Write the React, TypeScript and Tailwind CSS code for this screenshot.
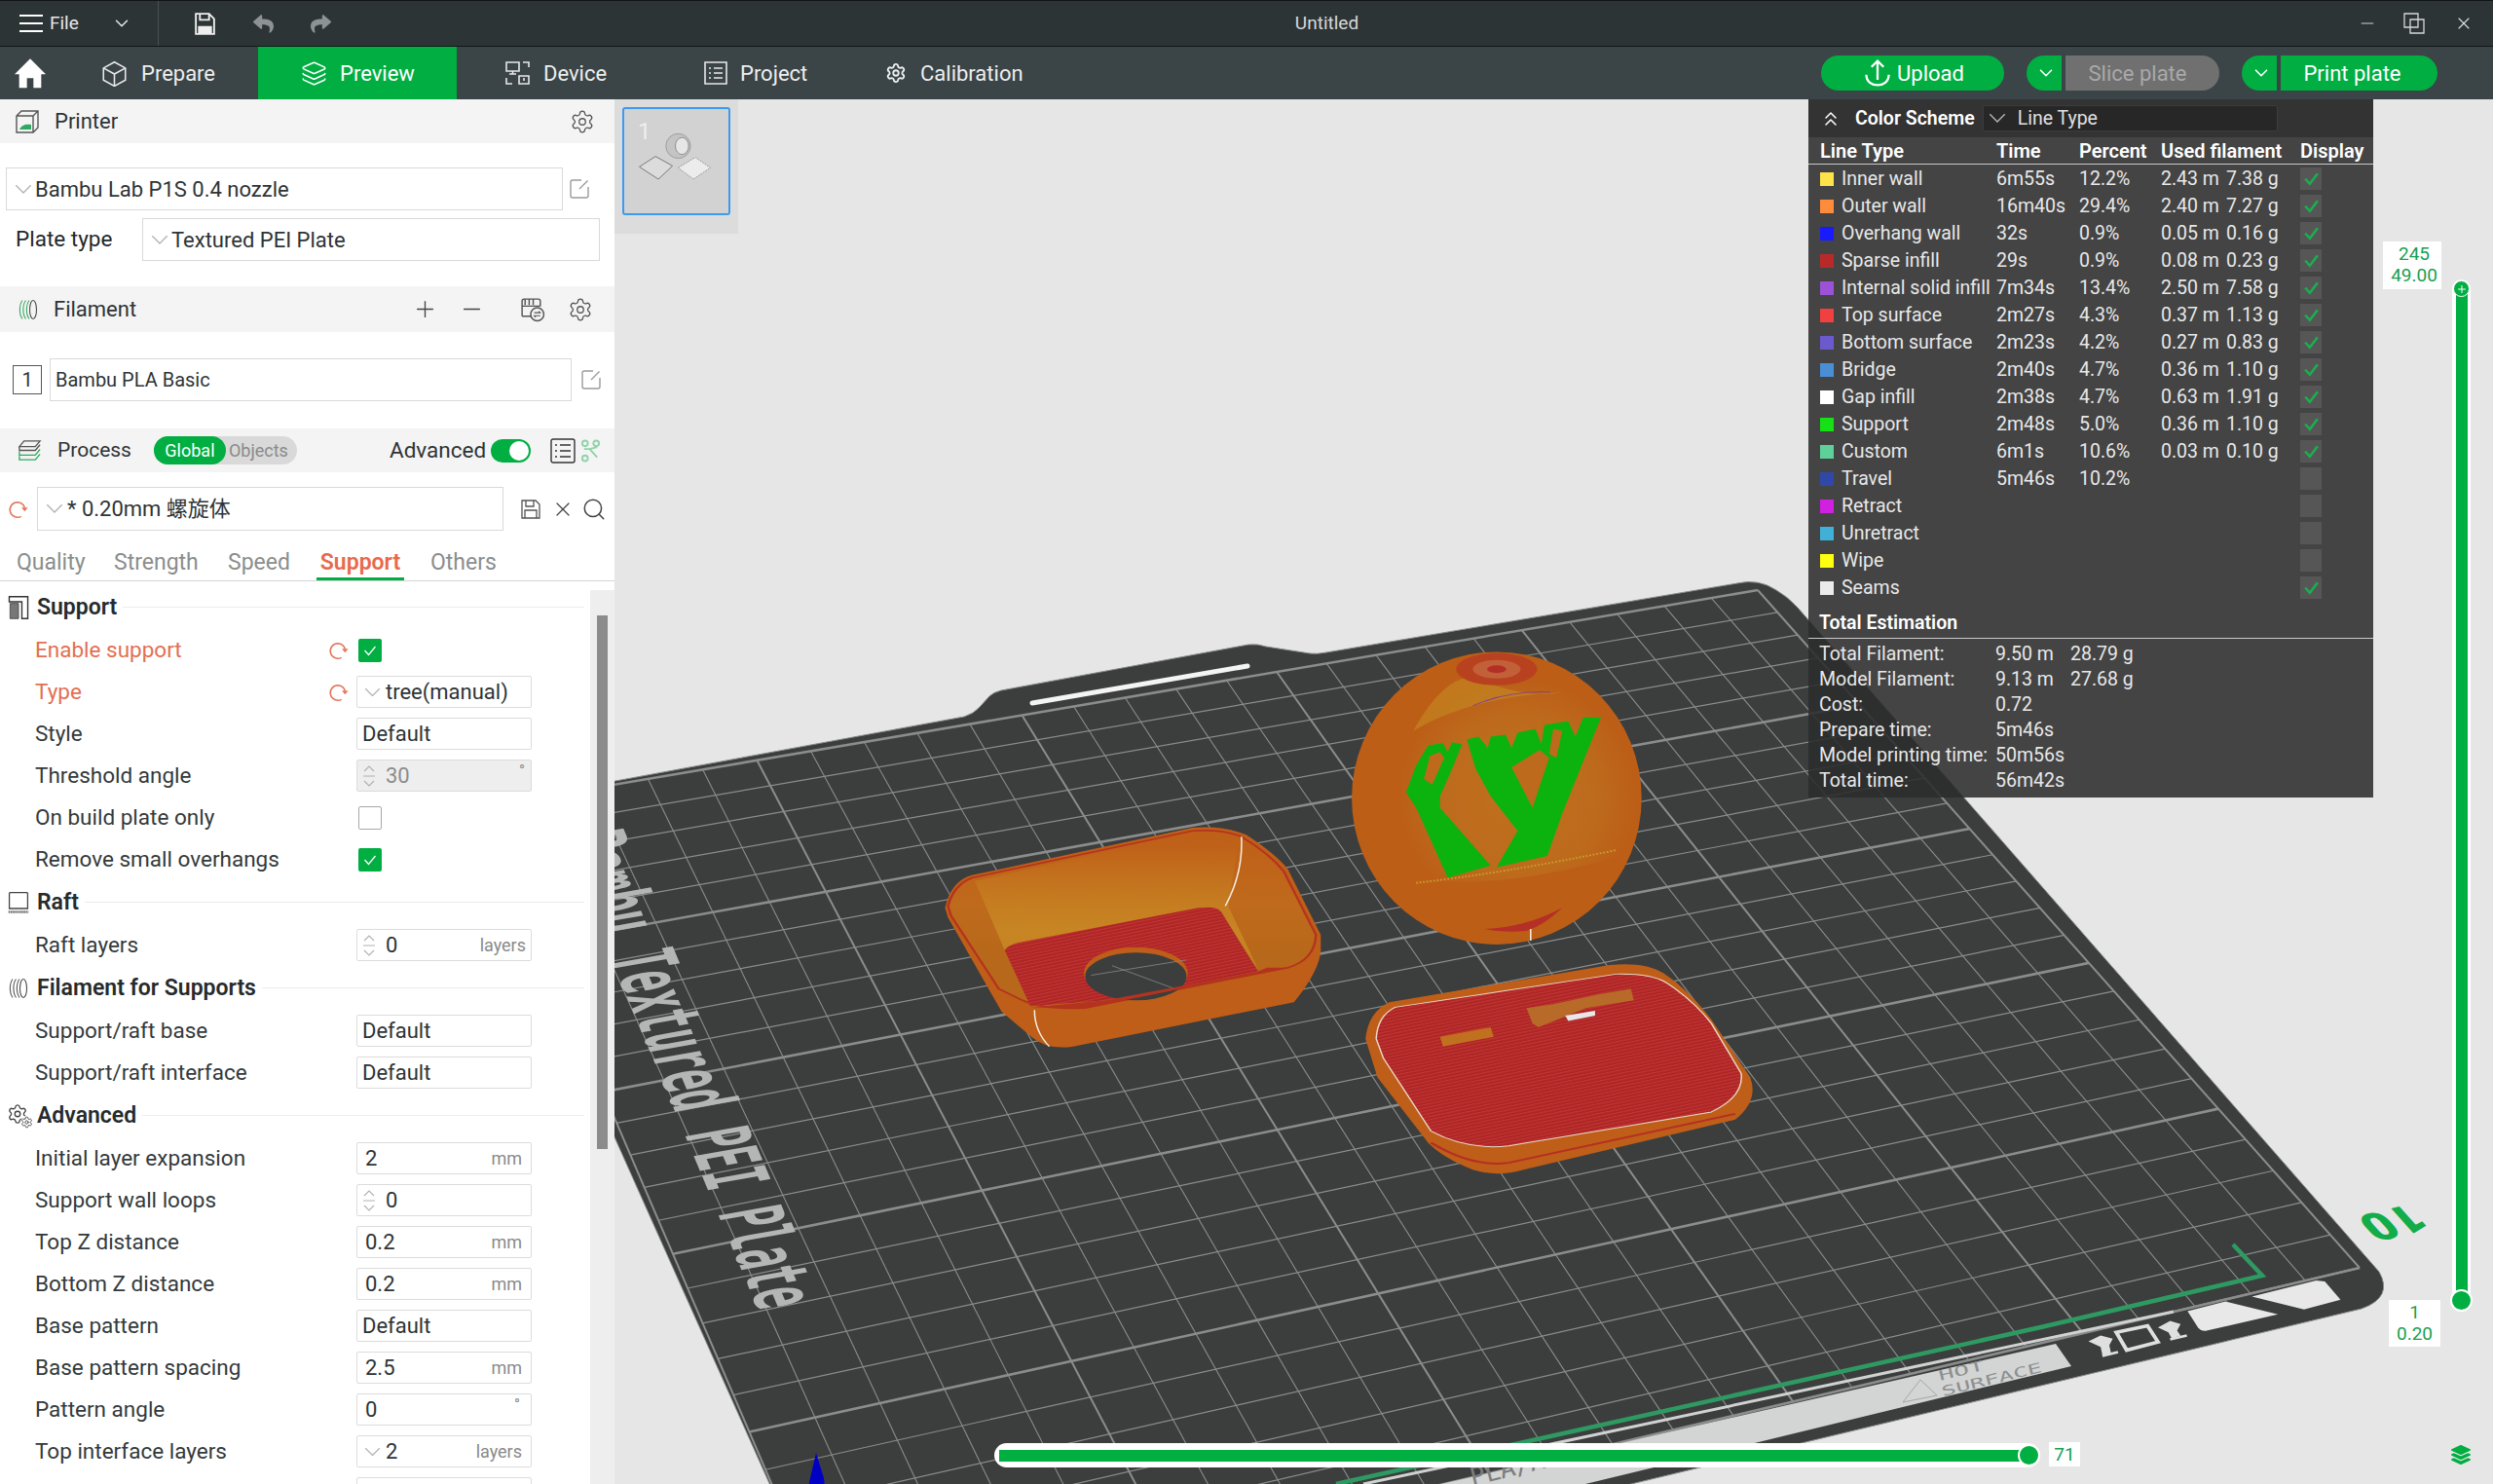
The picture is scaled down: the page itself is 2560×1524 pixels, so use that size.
import { ChevronDown, ChevronsUp, Layers, Minus, Plus, Search, Settings, X } from 'lucide-react';
import { FaLayerGroup, FaReply, FaShare } from 'react-icons/fa';

const Chev = ({ className = 'w-[18px]' }: { className?: string }) => (
  <svg viewBox="0 0 14 8" className={`${className} shrink-0`} fill="none" stroke="#b4b4b4" strokeWidth="1.1">
    <path d="M1 1l6 6 6-6" />
  </svg>
);

const EditIcon = () => (
  <svg viewBox="0 0 24 24" className="w-[24px] h-[24px]" fill="none" stroke="#9b9b9b" strokeWidth="1.4">
    <path d="M14 3H5a2 2 0 0 0-2 2v14a2 2 0 0 0 2 2h14a2 2 0 0 0 2-2v-9M20.5 3.5L12 12" />
  </svg>
);

const UndoIcon = ({ size = 'w-[22px] h-[22px]' }: { size?: string }) => (
  <svg viewBox="0 0 24 24" className={size} fill="none" stroke="#e2765a" strokeWidth="1.7">
    <path d="M20 10a9 9 0 0 0-8-6 8.500 8.500 0 1 0 4 16" />
    <path d="M16.500 10h7l-3.500 4.500z" fill="#e2765a" stroke="none" />
  </svg>
);

const Stepper = ({ color = '#a8a8a8' }: { color?: string }) => (
  <svg viewBox="0 0 14 26" className="w-[14px] h-[26px] shrink-0" fill="none" stroke={color} strokeWidth="1.1">
    <path d="M2 8l5-5 5 5M2 18l5 5 5-5M1 13h12" strokeOpacity="0.9" />
  </svg>
);

const FilamentIcon = ({ stroke = '#3aa861' }: { stroke?: string }) => (
  <svg viewBox="0 0 24 24" className="w-[24px] h-[24px]" fill="none" stroke={stroke} strokeWidth="1.1">
    <path d="M6 2.500C2.500 7 2.500 17 6 21.500M9.500 2.500C6 7 6 17 9.500 21.500M13 2.500C9.500 7 9.500 17 13 21.500" />
    <ellipse cx="17" cy="12" rx="3.500" ry="9.500" stroke="#4a4a4a" />
  </svg>
);

const SectionIcon = ({ name }: { name: string }) => {
  if (name === 'Support')
    return (
      <svg viewBox="0 0 26 30" className="w-[24px] h-[26px]" fill="none" stroke="#333" strokeWidth="1.6">
        <path d="M2 2h22v26h-7V8H2z" />
        <path d="M3 10h10v18H3z" fill="#777" stroke="#444" strokeWidth="1" />
      </svg>
    );
  if (name === 'Raft')
    return (
      <svg viewBox="0 0 26 28" className="w-[24px] h-[24px]" fill="none" stroke="#444" strokeWidth="1.5">
        <path d="M2 21V3a1 1 0 0 1 1-1h20a1 1 0 0 1 1 1v18z" />
        <path d="M1 25h24" strokeWidth="3" strokeDasharray="2 0.6" stroke="#777" />
      </svg>
    );
  if (name === 'Filament for Supports') return <FilamentIcon stroke="#555" />;
  return (
    <div className="relative w-[26px] h-[26px]">
      <Settings className="w-[22px] h-[22px] text-[#444]" strokeWidth={1.5} />
      <Settings className="absolute left-[14px] top-[13px] w-[13px] h-[13px] text-[#444] bg-white rounded-full" strokeWidth={1.7} />
    </div>
  );
};

type Row = {
  label: string;
  kind: 'check' | 'box' | 'select' | 'step' | 'num' | 'disabled' | 'pick';
  value?: string;
  unit?: string;
  on?: boolean;
  dirty?: boolean;
};

const sections: { title: string; rows: Row[] }[] = [
  {
    title: 'Support',
    rows: [
      { label: 'Enable support', kind: 'check', on: true, dirty: true },
      { label: 'Type', kind: 'pick', value: 'tree(manual)', dirty: true },
      { label: 'Style', kind: 'select', value: 'Default' },
      { label: 'Threshold angle', kind: 'disabled', value: '30', unit: '°' },
      { label: 'On build plate only', kind: 'check', on: false },
      { label: 'Remove small overhangs', kind: 'check', on: true },
    ],
  },
  { title: 'Raft', rows: [{ label: 'Raft layers', kind: 'step', value: '0', unit: 'layers' }] },
  {
    title: 'Filament for Supports',
    rows: [
      { label: 'Support/raft base', kind: 'select', value: 'Default' },
      { label: 'Support/raft interface', kind: 'select', value: 'Default' },
    ],
  },
  {
    title: 'Advanced',
    rows: [
      { label: 'Initial layer expansion', kind: 'num', value: '2', unit: 'mm' },
      { label: 'Support wall loops', kind: 'step', value: '0' },
      { label: 'Top Z distance', kind: 'num', value: '0.2', unit: 'mm' },
      { label: 'Bottom Z distance', kind: 'num', value: '0.2', unit: 'mm' },
      { label: 'Base pattern', kind: 'select', value: 'Default' },
      { label: 'Base pattern spacing', kind: 'num', value: '2.5', unit: 'mm' },
      { label: 'Pattern angle', kind: 'num', value: '0', unit: '°' },
      { label: 'Top interface layers', kind: 'pick', value: '2', unit: 'layers' },
      { label: '', kind: 'select', value: '' },
    ],
  },
];

const unitClass = (row: Row) => {
  if (row.label === 'Raft layers') return 'pr-[5px] text-[18px]';
  if (row.label === 'Threshold angle') return 'pr-[6px] text-[16px] self-start leading-[22px]';
  if (row.unit === '°') return 'pr-[11px] text-[16px] self-start leading-[22px]';
  return 'pr-[9px] text-[18px]';
};

const Field = ({ row }: { row: Row }) => {
  if (row.kind === 'check') {
    return row.on ? (
      <div className="w-[24px] h-[24px] ml-[2px] rounded-[2px] bg-[#00ae42] flex items-center justify-center">
        <svg viewBox="0 0 16 16" className="w-[16px] h-[16px]" fill="none" stroke="#fff" strokeWidth="1.3">
          <path d="M2.500 8l4 4.500 7-8.500" />
        </svg>
      </div>
    ) : (
      <div className="w-[24px] h-[24px] ml-[2px] rounded-[2px] bg-white border border-[#a8a8a8]" />
    );
  }
  const disabled = row.kind === 'disabled';
  return (
    <div
      className={`w-[180px] h-[33px] flex items-center border border-[#dcdcdc] rounded-[2px] text-[22px] ${
        disabled ? 'bg-[#eeeeee] text-[#8c8c8c]' : 'bg-white text-[#2e3436]'
      }`}
    >
      {row.kind === 'select' && <span className="pl-[5px]">{row.value}</span>}
      {row.kind === 'num' && <span className="pl-[8px]">{row.value}</span>}
      {row.kind === 'pick' && (
        <>
          <span className="pl-[7px] pr-[5px]">
            <Chev className="w-[17px]" />
          </span>
          <span>{row.value}</span>
        </>
      )}
      {(row.kind === 'step' || disabled) && (
        <>
          <span className="pl-[5px] pr-[10px] flex">
            <Stepper />
          </span>
          <span>{row.value}</span>
        </>
      )}
      {row.unit && <span className={`ml-auto text-[#8a8a8a] ${unitClass(row)}`}>{row.unit}</span>}
    </div>
  );
};

const SettingRow = ({ row }: { row: Row }) => (
  <div className="h-[43px] flex items-center shrink-0">
    <div className={`w-[336px] pl-[36px] text-[22.5px] ${row.dirty ? 'text-[#e36f52]' : 'text-[#333a3c]'}`}>{row.label}</div>
    <div className="w-[30px] flex items-center">{row.dirty && <UndoIcon />}</div>
    {row.label ? <Field row={row} /> : <div className="w-[180px] h-[33px] border border-[#dcdcdc] rounded-[2px]" />}
  </div>
);

const PanelHeader = ({ children, className = '' }: { children: React.ReactNode; className?: string }) => (
  <div className={`bg-[#f4f4f4] flex items-center text-[22px] text-[#2e3436] shrink-0 ${className}`}>{children}</div>
);

const LeftPanel = () => (
  <aside className="w-[631px] shrink-0 bg-white flex flex-col overflow-hidden">
    <PanelHeader className="h-[45px]">
      <svg viewBox="0 0 26 26" className="w-[26px] h-[26px] ml-[15px]" fill="none" stroke="#555" strokeWidth="1.4">
        <path d="M2 7l5-5h17v17l-5 5H2zM2 7h17v17M19 7l5-5" />
        <path d="M5 21c2-5 7-6 12-5v5z" fill="#2fa860" stroke="none" />
      </svg>
      <span className="ml-[15px]">Printer</span>
      <Settings className="ml-auto mr-[20px] w-[26px] h-[26px] text-[#555]" strokeWidth={1.2} />
    </PanelHeader>

    <div className="pt-[25px] pb-[26px] flex flex-col gap-[8px] shrink-0">
      <div className="flex items-center h-[44px] pl-[6px]">
        <div className="w-[572px] h-full border border-[#d9d9d9] flex items-center pl-[8px] gap-[3px] text-[22px] text-[#2e3436]">
          <Chev />
          Bambu Lab P1S 0.4 nozzle
        </div>
        <span className="ml-[5px]">
          <EditIcon />
        </span>
      </div>
      <div className="flex items-center h-[44px]">
        <div className="w-[146px] pl-[16px] text-[22.5px] text-[#22282a]">Plate type</div>
        <div className="w-[470px] h-full border border-[#d9d9d9] flex items-center pl-[8px] gap-[3px] text-[22px] text-[#2e3436]">
          <Chev />
          Textured PEI Plate
        </div>
      </div>
    </div>

    <PanelHeader className="h-[47px]">
      <span className="ml-[17px] flex">
        <FilamentIcon />
      </span>
      <span className="ml-[14px]">Filament</span>
      <Plus className="ml-[283px] w-[27px] h-[27px] text-[#444]" strokeWidth={1.2} />
      <Minus className="ml-[21px] w-[27px] h-[27px] text-[#444]" strokeWidth={1.2} />
      <svg viewBox="0 0 26 26" className="ml-[35px] w-[27px] h-[27px]" fill="none" stroke="#555" strokeWidth="1.4">
        <path d="M3 20V5a2 2 0 0 1 2-2h14a2 2 0 0 1 2 2v5M6 3v6M10 3v6M14 3v6M3 10h18M3 20h10" />
        <circle cx="18" cy="18" r="6.500" fill="#f4f4f4" />
        <path d="M15 16.500h6l-1.500-1.500M21 19.500h-6l1.500 1.500" strokeWidth="1" />
      </svg>
      <Settings className="ml-[23px] w-[26px] h-[26px] text-[#555]" strokeWidth={1.2} />
    </PanelHeader>

    <div className="pt-[27px] pb-[28px] flex items-center shrink-0 h-[99px]">
      <div className="ml-[13px] w-[30px] h-[30px] border border-[#555] flex items-center justify-center text-[20px] text-[#2e3436]">
        1
      </div>
      <div className="ml-[8px] w-[536px] h-[44px] border border-[#d9d9d9] flex items-center pl-[5px] text-[20px] text-[#2e3436]">
        Bambu PLA Basic
      </div>
      <span className="ml-[8px]">
        <EditIcon />
      </span>
    </div>

    <PanelHeader className="h-[45px]">
      <svg viewBox="0 0 26 26" className="ml-[18px] w-[25px] h-[25px]" fill="none" stroke="#555" strokeWidth="1.4">
        <path d="M2 9l5-6h17l-5 6zM2 9v4h17l5-6" />
        <path d="M2 14v4h17l5-6M2 19v4h17l5-6" stroke="#2fa860" />
      </svg>
      <span className="ml-[16px] text-[21px]">Process</span>
      <div className="ml-[23px] h-[29px] w-[147px] rounded-full bg-[#d9d9d9] flex items-center text-[18px] text-[#8a8a8a]">
        <span className="w-[74px] h-full rounded-full bg-[#00ae42] text-white flex items-center justify-center">Global</span>
        <span className="pl-[3px]">Objects</span>
      </div>
      <span className="ml-[95px] text-[22.5px]">Advanced</span>
      <div className="ml-[5px] w-[41px] h-[24px] rounded-full bg-[#00ae42] flex items-center justify-end pr-[2px]">
        <div className="w-[20px] h-[20px] rounded-full bg-white" />
      </div>
      <svg viewBox="0 0 26 26" className="ml-[20px] w-[26px] h-[26px]" fill="none" stroke="#333" strokeWidth="1.4">
        <rect x="1" y="1" width="24" height="24" rx="2" />
        <path d="M5 7h2M10 7h11M5 13h2M10 13h11M5 19h2M10 19h11" />
      </svg>
      <svg viewBox="0 0 22 26" className="ml-[5px] w-[21px] h-[26px]" fill="none" stroke="#8fd3a8" strokeWidth="2">
        <circle cx="5" cy="5" r="3" />
        <circle cx="17" cy="5" r="3" />
        <circle cx="5" cy="21" r="3" />
        <path d="M4 11h6l8 9M10 11l8-2" />
      </svg>
    </PanelHeader>

    <div className="pt-[15px] flex items-center shrink-0">
      <span className="ml-[7px] flex">
        <UndoIcon />
      </span>
      <div className="ml-[9px] w-[479px] h-[45px] border border-[#d9d9d9] flex items-center pl-[8px] gap-[4px] text-[22px] text-[#2e3436]">
        <Chev />
        * 0.20mm 螺旋体
      </div>
      <svg viewBox="0 0 24 24" className="ml-[16px] w-[24px] h-[24px]" fill="none" stroke="#555" strokeWidth="1.3">
        <path d="M3 3h14l4 4v14H3zM7 3v6h8V3M6 21v-8h12v8" />
      </svg>
      <X className="ml-[9px] w-[24px] h-[24px] text-[#444]" strokeWidth={1.3} />
      <Search className="ml-[7px] w-[26px] h-[26px] text-[#444]" strokeWidth={1.4} />
    </div>

    <div className="h-[52px] border-b border-[#d5d5d5] flex text-[23px] text-[#8a8e8e] pl-[17px] items-end shrink-0 leading-[50px]">
      <span className="h-[43px] w-[100px]">Quality</span>
      <span className="h-[43px] w-[117px]">Strength</span>
      <span className="h-[43px] w-[91px]">Speed</span>
      <span className="h-[43px] w-[90px] text-center font-semibold text-[#e9694e] border-b-[3px] border-[#00ae42]">Support</span>
      <span className="h-[43px] ml-[27px]">Others</span>
    </div>

    <div className="flex flex-1 min-h-0 overflow-hidden">
      <div className="w-[606px] pt-[4px] flex flex-col shrink-0">
        {sections.map((section) => (
          <div key={section.title} className="flex flex-col">
            <div className="h-[45px] flex items-center shrink-0 pl-[7px] pr-[6px]">
              <div className="w-[26px] flex">
                <SectionIcon name={section.title} />
              </div>
              <span className="ml-[5px] pt-[2px] text-[23px] font-semibold text-[#262b2d] whitespace-nowrap">{section.title}</span>
              <div className="ml-[6px] flex-1 h-px bg-[#ececec]" />
            </div>
            {section.rows.map((row) => (
              <SettingRow key={row.label || 'last'} row={row} />
            ))}
          </div>
        ))}
      </div>
      <div className="w-[25px] bg-[#eeeeee] pl-[7px] pt-[26px] mt-[9px]">
        <div className="w-[11px] h-[548px] bg-[#8c8c8c]" />
      </div>
    </div>
  </aside>
);

// maps the bed's unit square on to the picture with a plain homography
const [p0, p1, p2, p3] = [
  [494, 829],
  [1805, 606],
  [2423, 1302],
  [856, 1672],
];
const dx1 = p1[0] - p2[0];
const dx2 = p3[0] - p2[0];
const dx3 = p0[0] - p1[0] + p2[0] - p3[0];
const dy1 = p1[1] - p2[1];
const dy2 = p3[1] - p2[1];
const dy3 = p0[1] - p1[1] + p2[1] - p3[1];
const den = dx1 * dy2 - dx2 * dy1;
const g = (dx3 * dy2 - dx2 * dy3) / den;
const h = (dx1 * dy3 - dx3 * dy1) / den;
const bed = (u: number, v: number) => {
  const w = g * u + h * v + 1;
  return [
    ((p1[0] - p0[0] + g * p1[0]) * u + (p3[0] - p0[0] + h * p3[0]) * v + p0[0]) / w,
    ((p1[1] - p0[1] + g * p1[1]) * u + (p3[1] - p0[1] + h * p3[1]) * v + p0[1]) / w,
  ];
};

const CELLS = 25;
const gridLines = Array.from({ length: CELLS + 1 }, (_, i) => i);

const Bed = () => (
  <>
    <path
      d="M480 830L990 736Q1000 733 1006 726L1016 715Q1020 711 1028 709L1282 662Q1292 661 1300 664L1345 671Q1352 672 1362 670L1784 599Q1806 594 1824 606Q1836 613 1846 624L2443 1306Q2458 1332 2425 1344L1650 1530H793L480 830Z"
      fill="#3c3e3e"
      stroke="#8a8c8c"
      strokeWidth="1"
    />
    <path d="M1060 722L1281 684" stroke="#f4f4f4" strokeWidth="5" strokeLinecap="round" />
    {gridLines.map((i) => {
      const a = bed(i / CELLS, 0);
      const b = bed(i / CELLS, 1);
      const c = bed(0, i / CELLS);
      const d = bed(1, i / CELLS);
      return (
        <g key={i} stroke="#8b8d8d">
          <line x1={a[0]} y1={a[1]} x2={b[0]} y2={b[1]} strokeWidth={i % 5 === 0 ? 2 : 1.1} />
          <line x1={c[0]} y1={c[1]} x2={d[0]} y2={d[1]} strokeWidth={i % 5 === 0 ? 2.6 : 1.2} />
        </g>
      );
    })}
    <text
      transform="matrix(0.387 0.922 -2.2 0.39 575 860)"
      fontFamily="'DejaVu Sans Mono', monospace"
      fontWeight="700"
      fontSize="40"
      fill="#b4b6b6"
      textLength="528"
      lengthAdjust="spacingAndGlyphs"
    >
      Bambu Textured PEI Plate
    </text>
    <path d="M1372 1524L2100 1362L2323 1310L2293 1278" fill="none" stroke="#2e9a62" strokeWidth="4.5" />
    <path d="M1400 1524L2232 1347" stroke="#d0d2d2" strokeWidth="3" />
    <path d="M2232 1347L2423 1302" stroke="#8b8d8d" strokeWidth="2" />
    <path d="M2111 1380L2127 1403L1628 1524H1480z" fill="#d3d5d5" />
    <text
      transform="matrix(0.97 -0.24 0.24 0.97 1992 1418)"
      fontFamily="'DejaVu Sans Mono', monospace"
      fontSize="14"
      fill="#8e9090"
      textLength="48"
      lengthAdjust="spacingAndGlyphs"
    >
      HOT
    </text>
    <text
      transform="matrix(0.97 -0.24 0.24 0.97 1995 1434)"
      fontFamily="'DejaVu Sans Mono', monospace"
      fontSize="14"
      fill="#8e9090"
      textLength="106"
      lengthAdjust="spacingAndGlyphs"
    >
      SURFACE
    </text>
    <path d="M1954 1440L1972 1417L1989 1433z" fill="none" stroke="#a5a7a7" strokeWidth="1" />
    <text
      transform="matrix(0.97 -0.24 0.24 0.97 1512 1526)"
      fontFamily="'DejaVu Sans Mono', monospace"
      fontSize="26"
      fill="#7c7e7e"
    >
      PLA/ABS
    </text>
    <g transform="translate(2000 1200) scale(0.357 0.333)">
      <path d="M690 440L800 410L950 450L745 500Q730 503 720 490z" fill="#e8e8e8" />
      <path d="M875 395L1060 345L1085 348L1130 405L1025 435z" fill="#e8e8e8" />
      <path d="M485 505L575 485L605 535L515 560z" fill="none" stroke="#dfdfdf" strokeWidth="11" />
      <path d="M405 533L440 515L475 525L465 545L470 570L445 575L440 550z" fill="#dfdfdf" />
      <path d="M605 490L640 470L670 480L660 500L670 515L645 525L635 505z" fill="#dfdfdf" />
      <path d="M445 578L490 566M640 527L688 515" stroke="#dfdfdf" strokeWidth="8" />
    </g>
    <text
      transform="matrix(-1.26 0.3 -0.8 -0.9 2476 1236)"
      fontFamily="Roboto, sans-serif"
      fontWeight="900"
      fontSize="40"
      fill="#12ad48"
    >
      10
    </text>
    <path d="M838 1492L846 1518Q847 1524 846 1530H831Q830 1524 832 1518z" fill="#0000c4" />
  </>
);

const Models = () => (
  <g transform="translate(900 620) scale(0.6124 0.3954)">
    {/* open box */}
    <path
      d="M115 790Q125 720 160 705L530 582Q580 575 620 600Q670 650 690 690L745 860V905Q740 960 700 1035L330 1150Q285 1160 260 1125L210 1060L120 815z"
      fill="#bf5e18"
    />
    <path
      d="M120 785Q130 730 160 712L530 590Q580 585 612 605Q660 650 683 695L737 860Q735 925 690 945L350 1050Q280 1055 245 1030L205 1000L125 810z"
      fill="url(#boxWall)"
      stroke="#b4331f"
      strokeWidth="4"
    />
    <path d="M165 720L530 595L608 610L590 785L640 950L575 800L240 885L215 900z" fill="url(#goldFade)" />
    <path d="M215 900Q220 885 245 878L540 790Q570 785 578 800L640 955L385 1030L258 1045z" fill="url(#redHatch)" />
    <ellipse cx="435" cy="960" rx="87" ry="68" fill="#bf5e18" />
    <ellipse cx="435" cy="968" rx="85" ry="62" fill="#3c3e3e" />
    <path d="M395 940L500 1000M360 965L520 925" stroke="#8b8d8d" strokeWidth="1.500" />
    <path d="M385 1030L640 955L655 945L690 945L350 1050L260 1048z" fill="#b4331f" />
    <path d="M612 605Q615 700 585 785M265 1055Q265 1110 290 1150" fill="none" stroke="#f5efe5" strokeWidth="2.500" />

    {/* sphere */}
    <ellipse cx="1040" cy="505" rx="243" ry="380" fill="#bd5e17" />
    <ellipse cx="1075" cy="500" rx="195" ry="300" fill="url(#sphereIn)" />
    <path d="M880 700Q1000 760 1240 660Q1200 800 1060 860Q950 830 880 700z" fill="#bd5e17" />
    <path d="M900 330Q950 190 1000 190Q1090 250 1150 230Q1000 240 900 330z" fill="#c58a22" fillOpacity="0.6" />
    <ellipse cx="1040" cy="170" rx="68" ry="42" fill="#b8421f" />
    <ellipse cx="1040" cy="170" rx="40" ry="24" fill="#c2603a" />
    <ellipse cx="1040" cy="170" rx="16" ry="10" fill="#b42f25" />
    <path d="M1000 265Q1060 225 1130 230" fill="none" stroke="#7a3aa0" strokeWidth="2" />
    <path d="M1020 845Q1090 840 1150 790Q1120 835 1090 850Q1050 855 1020 845z" fill="#b42f25" />
    <path d="M1097 845V875" stroke="#f5efe5" strokeWidth="2.500" />
    <path d="M888 490L905 420L925 368L950 362L958 385L965 360L982 365L965 430L945 500L945 530L1030 680L958 712L905 530z" fill="#0cb30f" />
    <path d="M928 395L945 385L952 400L932 470L918 455z" fill="#bd6a1c" />
    <path
      d="M1040 685L1125 655L1150 545L1215 295L1185 295L1172 345L1160 305L1120 315L1115 365L1105 325L1075 335L1065 375L1055 340L1030 345L1025 375L1010 345L990 352L1005 430L1030 500L1075 590z"
      fill="#0cb30f"
    />
    <path d="M1065 425L1112 380L1128 400L1100 530z" fill="#bd6a1c" />
    <path d="M1135 325L1150 330L1140 400L1128 390z" fill="#bd6a1c" />
    <path d="M905 725Q1050 700 1240 640" fill="none" stroke="#c99a2a" strokeWidth="5" strokeDasharray="3 3" />

    {/* lid */}
    <path
      d="M820 1130Q825 1060 860 1035L1230 938Q1290 930 1320 960Q1360 1000 1400 1080L1465 1230Q1480 1290 1440 1340L1085 1470Q1040 1490 1000 1470Q950 1440 925 1400L840 1230z"
      fill="#bf5e18"
    />
    <path d="M930 1400Q1000 1465 1060 1452L1440 1325" fill="none" stroke="#b42f25" strokeWidth="5" />
    <path
      d="M838 1130Q840 1070 870 1048L1240 962Q1300 960 1325 985Q1370 1030 1400 1090L1450 1220Q1455 1280 1400 1320L1060 1408Q990 1420 930 1370L850 1180z"
      fill="url(#redHatch)"
      stroke="#e8d8c8"
      strokeWidth="2.500"
    />
    <path d="M945 1125L1030 1100L1035 1125L950 1150z" fill="#c0701f" />
    <path d="M1090 1050L1135 1040L1210 1015L1265 1000L1270 1030L1190 1050L1110 1100L1100 1090z" fill="#b86a28" />
    <path d="M1155 1070L1205 1057L1205 1070L1160 1084z" fill="#e8e8e8" />
  </g>
);

const Viewport3D = () => (
  <svg viewBox="631 102 1929 1422" className="absolute inset-0 w-full h-full">
    <defs>
      <pattern id="redHatch" width="5" height="8" patternUnits="userSpaceOnUse" patternTransform="rotate(-18)">
        <rect width="5" height="8" fill="#ac2528" />
        <rect width="5" height="3" fill="#c2352e" />
      </pattern>
      <linearGradient id="goldFade" x1="0.5" y1="0" x2="0.5" y2="1">
        <stop offset="0.1" stopColor="#d2a02a" stopOpacity="0" />
        <stop offset="0.7" stopColor="#d2a02a" stopOpacity="0.5" />
      </linearGradient>
      <linearGradient id="boxWall" x1="0.5" y1="0" x2="0.5" y2="0.7">
        <stop offset="0" stopColor="#bf5f18" />
        <stop offset="0.6" stopColor="#bf6a1c" />
        <stop offset="1" stopColor="#b8681a" />
      </linearGradient>
      <radialGradient id="sphereIn">
        <stop offset="0" stopColor="#c0701e" />
        <stop offset="0.7" stopColor="#bd6a1c" />
        <stop offset="1" stopColor="#bc5f18" />
      </radialGradient>
    </defs>
    <Bed />
    <Models />
  </svg>
);

const legendRows = [
  { color: '#ffe34a', name: 'Inner wall', time: '6m55s', pct: '12.2%', m: '2.43 m', g: '7.38 g', on: true },
  { color: '#ff8c3c', name: 'Outer wall', time: '16m40s', pct: '29.4%', m: '2.40 m', g: '7.27 g', on: true },
  { color: '#1a1aff', name: 'Overhang wall', time: '32s', pct: '0.9%', m: '0.05 m', g: '0.16 g', on: true },
  { color: '#b82a2a', name: 'Sparse infill', time: '29s', pct: '0.9%', m: '0.08 m', g: '0.23 g', on: true },
  { color: '#9b52d6', name: 'Internal solid infill', time: '7m34s', pct: '13.4%', m: '2.50 m', g: '7.58 g', on: true },
  { color: '#f24040', name: 'Top surface', time: '2m27s', pct: '4.3%', m: '0.37 m', g: '1.13 g', on: true },
  { color: '#6a5acd', name: 'Bottom surface', time: '2m23s', pct: '4.2%', m: '0.27 m', g: '0.83 g', on: true },
  { color: '#4a8fd6', name: 'Bridge', time: '2m40s', pct: '4.7%', m: '0.36 m', g: '1.10 g', on: true },
  { color: '#ffffff', name: 'Gap infill', time: '2m38s', pct: '4.7%', m: '0.63 m', g: '1.91 g', on: true },
  { color: '#16e016', name: 'Support', time: '2m48s', pct: '5.0%', m: '0.36 m', g: '1.10 g', on: true },
  { color: '#5ed09a', name: 'Custom', time: '6m1s', pct: '10.6%', m: '0.03 m', g: '0.10 g', on: true },
  { color: '#3048a8', name: 'Travel', time: '5m46s', pct: '10.2%', m: '', g: '', on: false },
  { color: '#d020e0', name: 'Retract', time: '', pct: '', m: '', g: '', on: false },
  { color: '#40b0d8', name: 'Unretract', time: '', pct: '', m: '', g: '', on: false },
  { color: '#ffff10', name: 'Wipe', time: '', pct: '', m: '', g: '', on: false },
  { color: '#ebebeb', name: 'Seams', time: '', pct: '', m: '', g: '', on: true },
];

const totals = [
  ['Total Filament:', '9.50 m', '28.79 g'],
  ['Model Filament:', '9.13 m', '27.68 g'],
  ['Cost:', '0.72', ''],
  ['Prepare time:', '5m46s', ''],
  ['Model printing time:', '50m56s', ''],
  ['Total time:', '56m42s', ''],
];

const Legend = () => (
  <div className="absolute left-[1226px] top-0 w-[580px] h-[717px] bg-[#2c2c2c]/87 text-[#e8e8e8] text-[19.5px]">
    <div className="h-[39px] bg-[#333333] flex items-center pl-[11px] text-white">
      <ChevronsUp className="w-[24px] h-[24px]" strokeWidth={1.5} />
      <span className="ml-[13px] font-semibold">Color Scheme</span>
      <div className="ml-[8px] w-[303px] h-[27px] bg-[#272727] border border-[#3c3c3c] rounded-[2px] flex items-center pl-[5px] gap-[12px] text-[#e0e0e0] leading-[32px]">
        <Chev />
        Line Type
      </div>
    </div>
    <div className="h-[28px] bg-[#454545]/60 border-b border-[#c9c9c9] grid grid-cols-[181px_85px_84px_143px_1fr] items-center pl-[12px] font-semibold text-white leading-[22px] text-[20px]">
      <span>Line Type</span>
      <span>Time</span>
      <span>Percent</span>
      <span>Used filament</span>
      <span>Display</span>
    </div>
    <div>
      {legendRows.map((r) => (
        <div key={r.name} className="h-[28px] grid grid-cols-[181px_85px_84px_67px_76px_1fr] items-center pl-[12px]">
          <div className="flex items-center">
            <span className="w-[14px] h-[14px]" style={{ backgroundColor: r.color }} />
            <span className="ml-[8px] whitespace-nowrap">{r.name}</span>
          </div>
          <span>{r.time}</span>
          <span>{r.pct}</span>
          <span>{r.m}</span>
          <span>{r.g}</span>
          <div className="w-[22px] h-[23px] bg-[#565656] flex items-center justify-center">
            {r.on && (
              <svg viewBox="0 0 16 16" className="w-[17px] h-[17px]" fill="none" stroke="#1bae50" strokeWidth="2.4">
                <path d="M2 8l4.500 5L14 3" />
              </svg>
            )}
          </div>
        </div>
      ))}
    </div>
    <div className="h-[32px] mt-[7px] pl-[11px] flex items-center font-semibold text-white border-b border-[#c9c9c9]">
      Total Estimation
    </div>
    <div className="pt-[1px]">
      {totals.map(([name, a, b]) => (
        <div key={name} className="h-[26px] grid grid-cols-[181px_77px_1fr] items-center pl-[11px]">
          <span className="whitespace-nowrap">{name}</span>
          <span className="whitespace-nowrap">{a}</span>
          <span>{b}</span>
        </div>
      ))}
    </div>
  </div>
);

const Thumbnail = () => (
  <div className="absolute left-0 top-0 w-[127px] h-[138px] bg-[#dcdcdc] pt-[8px] pl-[8px]">
    <div className="relative w-[111px] h-[111px] bg-[#d2d2d2] border-2 border-[#3b9bef] rounded-[3px] overflow-hidden">
      <span className="absolute left-[14px] top-[6px] text-[24px] text-[#eeeeee] leading-[34px]">1</span>
      <svg viewBox="639 110 110 110" className="absolute inset-0 w-full h-full">
        <circle cx="696" cy="149" r="13" fill="#c4c4c4" stroke="#9c9c9c" />
        <ellipse cx="700" cy="149" rx="7" ry="9" fill="#e6e6e6" stroke="#8c8c8c" />
        <path d="M655 171L672 160L690 170L675 184z" fill="#dcdcdc" stroke="#777" />
        <path d="M696 172L714 161L730 172L712 184z" fill="#ececec" stroke="#999" strokeDasharray="2 1" />
      </svg>
    </div>
  </div>
);

const Knob = ({ r }: { r: string }) => (
  <div className={`rounded-full bg-[#00ae42] border-2 border-white ${r}`} />
);

const Sliders = () => (
  <>
    <div className="absolute left-[1887px] top-[185px] w-[19px] h-[1058px] bg-white rounded-full flex flex-col items-center justify-between">
      <div className="w-[17px] h-[17px] mt-[1px] rounded-full bg-[#00ae42] border border-white flex items-center justify-center z-10">
        <Plus className="w-[12px] h-[12px] text-white" strokeWidth={2} />
      </div>
      <div className="absolute top-[8px] bottom-[10px] w-[12px] bg-[#00ae42]" />
      <div className="z-10 -mb-[2px]">
        <Knob r="w-[23px] h-[23px]" />
      </div>
    </div>
    <div className="absolute left-[1816px] top-[146px] w-[60px] h-[49px] bg-white text-[#18a050] text-[19px] leading-[22px] text-center pt-[2px] pl-[4px]">
      245
      <br />
      49.00
    </div>
    <div className="absolute left-[1822px] top-[1233px] w-[53px] h-[48px] bg-white text-[#18a050] text-[19px] leading-[22px] text-center pt-[2px]">
      1
      <br />
      0.20
    </div>

    <div className="absolute left-[390px] top-[1380px] w-[1074px] h-[25px] bg-white rounded-full flex items-center pl-[5px]">
      <div className="flex-1 h-[12px] bg-[#00ae42]" />
      <Knob r="w-[23px] h-[23px] -ml-[2px]" />
    </div>
    <div className="absolute left-[1473px] top-[1379px] w-[32px] h-[25px] bg-white text-[#18a050] text-[19px] leading-[25px] text-center">
      71
    </div>
    <FaLayerGroup className="absolute left-[1886px] top-[1382px] w-[20px] h-[20px] text-[#00ae42]" />
  </>
);

const TitleBar = () => (
  <header className="h-[48px] bg-[#2d3436] border-y border-[#111516] flex items-center text-white shrink-0">
    <div className="w-[163px] h-full flex items-center border-r border-[#4a5052] pl-[20px]">
      <svg viewBox="0 0 24 20" className="w-[24px] h-[20px]" fill="none" stroke="#fff" strokeWidth="2">
        <path d="M0 2h24M0 10h24M0 18h24" />
      </svg>
      <span className="ml-[7px] text-[19px] text-[#e8e8e8]">File</span>
      <ChevronDown className="ml-[33px] w-[22px] h-[22px] text-[#e8e8e8]" strokeWidth={1.6} />
    </div>
    <svg viewBox="0 0 24 24" className="ml-[35px] w-[25px] h-[25px]" fill="none" stroke="#eee" strokeWidth="1.8">
      <path d="M3 2h13l5 5v15H3zM7 2v6h9V2" />
      <path d="M6 15h12v6H6z" fill="#eee" />
    </svg>
    <FaReply className="ml-[35px] w-[25px] h-[21px] text-[#8d9293]" />
    <FaShare className="ml-[34px] w-[25px] h-[21px] text-[#8d9293]" />
    <div className="flex-1 text-center text-[19px] text-[#d6d8d8] pr-[38px]">Untitled</div>
    <Minus className="w-[20px] h-[20px] text-[#cfd2d2]" strokeWidth={1.3} />
    <svg viewBox="0 0 24 24" className="ml-[26px] w-[24px] h-[24px]" fill="none" stroke="#d6d8d8" strokeWidth="1.3">
      <path d="M2 2h14v14H2zM8 8h14v14H8z" />
    </svg>
    <X className="ml-[29px] mr-[20px] w-[20px] h-[20px] text-[#e0e2e2]" strokeWidth={1.3} />
  </header>
);

const NavBar = () => (
  <nav className="h-[54px] bg-[#3b4446] flex items-center text-[22px] text-[#eceeee] shrink-0">
    <svg viewBox="0 0 24 24" className="ml-[15px] w-[32px] h-[32px]" fill="#fff">
      <path d="M12 1L24 13H20.500V23.500H14.500V16H9.500V23.500H3.500V13H0z" />
    </svg>
    <svg viewBox="0 0 24 24" className="ml-[57px] w-[27px] h-[27px]" fill="none" stroke="#e8e8e8" strokeWidth="1.4">
      <path d="M12 1.500l10 5.500v11l-10 5.500L2 18V7zM2 7l10 5.500L22 7M12 12.500v11" />
    </svg>
    <span className="ml-[14px] w-[120px]">Prepare</span>
    <div className="w-[204px] h-full bg-[#00ae42] flex items-center pl-[44px] text-white">
      <Layers className="w-[27px] h-[27px]" strokeWidth={1.4} />
      <span className="ml-[13px]">Preview</span>
    </div>
    <svg viewBox="0 0 26 26" className="ml-[50px] w-[26px] h-[26px]" fill="none" stroke="#e8e8e8" strokeWidth="1.6">
      <path d="M1 2h13v9H1zM4 14h7M7.500 11v3M18 2h6v5M1 18v6h6M14 16h10v8H14zM19 18v3" />
    </svg>
    <span className="ml-[13px] w-[164px]">Device</span>
    <svg viewBox="0 0 26 26" className="w-[26px] h-[26px]" fill="none" stroke="#e8e8e8" strokeWidth="1.6">
      <path d="M2 2h22v22H2zM6 8h2M11 8h9M6 13h2M11 13h9M6 18h2M11 18h9" />
    </svg>
    <span className="ml-[12px] w-[149px]">Project</span>
    <Settings className="w-[22px] h-[22px]" strokeWidth={2} />
    <span className="ml-[14px]">Calibration</span>

    <div className="ml-auto mr-[57px] flex items-center h-[36px] text-white">
      <div className="w-[188px] h-full rounded-full bg-[#00ae42] flex items-center justify-center gap-[5px] pl-[2px]">
        <svg viewBox="0 0 32 36" className="w-[30px] h-[32px]" fill="none" stroke="#fff" strokeWidth="2.600">
          <path d="M16 26V4M9 11l7-7 7 7M3 20c0 16 26 16 26 0" />
        </svg>
        Upload
      </div>
      <div className="ml-[23px] w-[36px] h-full rounded-l-full bg-[#00ae42] flex items-center justify-center pl-[3px]">
        <ChevronDown className="w-[22px] h-[22px]" strokeWidth={1.8} />
      </div>
      <div className="ml-[4px] w-[158px] h-full rounded-r-full bg-[#707070] text-[#a9a9a9] flex items-center justify-center pr-[10px]">
        Slice plate
      </div>
      <div className="ml-[23px] w-[36px] h-full rounded-l-full bg-[#00ae42] flex items-center justify-center pl-[3px]">
        <ChevronDown className="w-[22px] h-[22px]" strokeWidth={1.8} />
      </div>
      <div className="ml-[4px] w-[161px] h-full rounded-r-full bg-[#00ae42] flex items-center justify-center pr-[14px]">Print plate</div>
    </div>
  </nav>
);

export default function App() {
  return (
    <div className="w-[2560px] h-[1524px] flex flex-col overflow-hidden font-[Roboto,'Noto_Sans_CJK_SC',sans-serif]">
      <TitleBar />
      <NavBar />
      <main className="flex flex-1 min-h-0">
        <LeftPanel />
        <section className="relative flex-1 bg-[#e6e6e6] overflow-hidden">
          <Viewport3D />
          <Thumbnail />
          <Legend />
          <Sliders />
        </section>
      </main>
    </div>
  );
}
